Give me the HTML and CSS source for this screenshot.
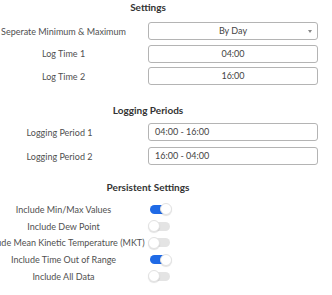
FILE: index.html
```html
<!DOCTYPE html>
<html>

<head>
    <meta charset="utf-8" />
    <title>Settings</title>
    <link rel="stylesheet" href="styles.css">
</head>

<body>
    <div class="panel">
        <h3 class="title">Settings</h3>
        <div class="rows">
            <div class="row">
                <label class="lbl">Seperate Minimum &amp; Maximum</label>
                <div class="field select">By Day<span class="caret"></span></div>
            </div>
            <div class="row">
                <label class="lbl">Log Time 1</label>
                <div class="field center">04:00</div>
            </div>
            <div class="row">
                <label class="lbl">Log Time 2</label>
                <div class="field center">16:00</div>
            </div>
        </div>

        <h3 class="title t2">Logging Periods</h3>
        <div class="rows wide">
            <div class="row">
                <label class="lbl short">Logging Period 1</label>
                <div class="field">04:00 - 16:00</div>
            </div>
            <div class="row">
                <label class="lbl short">Logging Period 2</label>
                <div class="field">16:00 - 04:00</div>
            </div>
        </div>

        <h3 class="title t3">Persistent Settings</h3>
        <div class="toggles">
            <div class="trow">
                <span class="lbl">Include Min/Max Values</span>
                <span class="switch on"></span>
            </div>
            <div class="trow">
                <span class="lbl">Include Dew Point</span>
                <span class="switch"></span>
            </div>
            <div class="trow">
                <span class="lbl">Include Mean Kinetic Temperature (MKT)</span>
                <span class="switch"></span>
            </div>
            <div class="trow">
                <span class="lbl">Include Time Out of Range</span>
                <span class="switch on"></span>
            </div>
            <div class="trow">
                <span class="lbl">Include All Data</span>
                <span class="switch"></span>
            </div>
        </div>
    </div>
</body>

</html>
```

FILE: styles.css
```css
body,
h3 {
    margin: 0;
    padding: 0;
}

body {
    background: #fff;
    font-family: Lato, "Open Sans", sans-serif;
    font-size: 9px;
    color: #505050;
    overflow: hidden;
}

.panel {
    width: 332px;
}

.title {
    width: 296px;
    height: 14px;
    line-height: 14px;
    text-align: center;
    font-size: 10px;
    font-weight: bold;
    color: #333;
}

.t2 {
    margin-top: 18px;
}

.t3 {
    margin-top: 15px;
}

.rows {
    display: flex;
    flex-direction: column;
    gap: 4.5px;
    margin-top: 8px;
}

.rows.wide {
    gap: 6px;
    margin-top: 6px;
}

.row {
    display: flex;
    align-items: center;
    gap: 21px;
}

.lbl {
    width: 127px;
    flex: none;
    text-align: center;
    white-space: nowrap;
    display: flex;
    justify-content: center;
}

.lbl.short {
    width: 119px;
    padding-right: 8px;
}

.field {
    width: 170px;
    height: 18px;
    box-sizing: border-box;
    border: 1px solid #b4b4b4;
    border-radius: 3px;
    line-height: 16px;
    padding-left: 6px;
    color: #444;
    position: relative;
}

.center {
    text-align: center;
    padding-left: 0;
}

.select {
    text-align: center;
    padding-left: 0;
}

.caret {
    position: absolute;
    right: 5px;
    top: 7px;
    border-left: 2.5px solid transparent;
    border-right: 2.5px solid transparent;
    border-top: 3px solid #888;
}

.toggles {
    margin-top: 7px;
}

.trow {
    height: 16.75px;
    display: flex;
    align-items: center;
    gap: 23px;
}

.switch {
    width: 20px;
    height: 9px;
    border-radius: 5px;
    background: #e4e4e4;
    position: relative;
    flex: none;
}

.switch::after {
    content: "";
    position: absolute;
    top: -1.5px;
    left: -2px;
    width: 12px;
    height: 12px;
    box-sizing: border-box;
    border-radius: 50%;
    background: #fff;
    border: 1px solid #e2e2e2;
    box-shadow: 0 1px 1px rgba(0, 0, 0, 0.12);
}

.switch.on {
    background: #1f6ae6;
}

.switch.on::after {
    left: auto;
    right: -2px;
}
```
